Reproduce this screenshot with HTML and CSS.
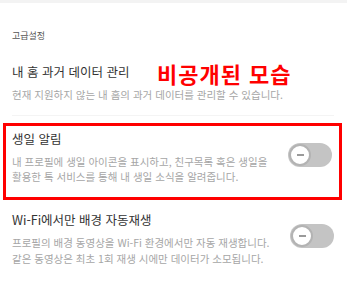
FILE: index.html
```html
<!DOCTYPE html>
<html lang="ko">
<head>
	<meta charset="utf-8">
	<title>고급설정</title>
	<link rel="stylesheet" href="styles.css">
</head>
<body>
	<div class="topbar"></div>
	<div class="settings">
		<div class="section-label">고급설정</div>

		<div class="item first">
			<div class="text">
				<div class="title">내 홈 과거 데이터 관리</div>
				<div class="desc">현재 지원하지 않는 내 홈의 과거 데이터를 관리할 수 있습니다.</div>
			</div>
		</div>
		<div class="divider"></div>

		<div class="item highlight">
			<div class="text">
				<div class="title">생일 알림</div>
				<div class="desc">내 프로필에 생일 아이콘을 표시하고, 친구목록 혹은 생일을 활용한 톡 서비스를 통해 내 생일 소식을 알려줍니다.</div>
			</div>
			<div class="toggle"><span class="knob"></span></div>
		</div>

		<div class="item">
			<div class="text">
				<div class="title">Wi-Fi에서만 배경 자동재생</div>
				<div class="desc">프로필의 배경 동영상을 Wi-Fi 환경에서만 자동 재생합니다. 같은 동영상은 최초 1회 재생 시에만 데이터가 소모됩니다.</div>
			</div>
			<div class="toggle"><span class="knob"></span></div>
		</div>
	</div>
	<div class="note">비공개된 모습</div>
</body>
</html>
```

FILE: styles.css
```css
body {
	margin: 0;
	background-color: #fff;
	font-family: "Noto Sans CJK KR", "Noto Sans", sans-serif;
	color: #333;
	position: relative;
}

.topbar {
	height: 3px;
	background-color: #f3f3f3;
}

.settings {
	padding: 0 13px 0 12px;
}

.section-label {
	margin-top: 26px;
	font-size: 9px;
	line-height: 14px;
	color: #555;
}

.item {
	display: flex;
	align-items: flex-start;
	margin-top: 11px;
}

.item.first {
	margin-top: 20px;
	padding-bottom: 12px;
}

.text {
	flex: 1;
	max-width: 266px;
}

.first .text {
	max-width: none;
}

.title {
	font-size: 12.5px;
	line-height: 18px;
	color: #333;
}

.desc {
	margin-top: 6px;
	font-size: 10.5px;
	line-height: 16px;
	color: #a6a6a6;
}

.divider {
	height: 1px;
	background-color: #f4f4f4;
}

.highlight {
	margin: 7px -8px 0 -9px;
	border: 3px solid #ff0000;
	padding: 4px 7px 13px 6px;
}

.highlight .desc {
	line-height: 15px;
}

.toggle {
	margin-left: auto;
	margin-top: 13px;
	width: 44px;
	height: 24px;
	border-radius: 12px;
	background-color: #c4c4c4;
	display: flex;
	align-items: center;
	padding-left: 1px;
	box-sizing: border-box;
}

.knob {
	width: 22px;
	height: 22px;
	border-radius: 50%;
	background-color: #fff;
	border: 2px solid #b3b3b3;
	box-sizing: border-box;
	display: flex;
	align-items: center;
	justify-content: center;
}

.knob::before {
	content: "";
	width: 7px;
	height: 2px;
	background-color: #9a9a9a;
}

.note {
	position: absolute;
	left: 157px;
	top: 63px;
	font-size: 22px;
	font-weight: bold;
	line-height: 20px;
	color: #ff0000;
	letter-spacing: 1px;
}
```
